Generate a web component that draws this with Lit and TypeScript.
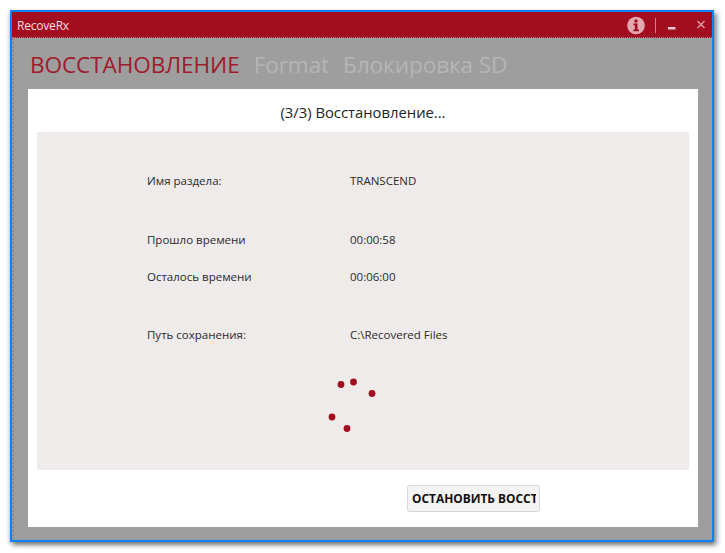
import { LitElement, html, css } from "lit";
import { customElement } from "lit/decorators.js";

@customElement("app-root")
export class AppRoot extends LitElement {
  static styles = css`
    :host { display: block; width: 725px; height: 553px; background: #fff; font-family: "Open Sans", "Noto Sans", sans-serif; overflow: hidden; }
    .page { box-sizing: border-box; width: 725px; height: 553px; padding: 10px 0 0 10px; }
    .window { box-sizing: border-box; width: 704px; height: 532px; border: 2px solid #0f7ffb; background: #9e9e9e; display: flex; flex-direction: column; box-shadow: 3px 3px 5px rgba(0,0,0,.45), -1px 2px 4px rgba(0,0,0,.2); }
    .titlebar { box-sizing: border-box; height: 26px; flex: none; background: #a20e20; display: flex; align-items: center; padding: 0 4px 0 5px; color: #f3dfe1; font-size: 12px; border-bottom: 1px dotted #8b8b8b; }
    .title { flex: 1; letter-spacing: -.2px; padding-top: 1px; }
    .controls { display: flex; align-items: center; }
    .body { flex: 1; display: flex; flex-direction: column; border-left: 2px dotted #8c8c8c; }
    .tabs { display: flex; gap: 14px; padding: 11px 0 0 16px; height: 40px; flex: none; box-sizing: border-box; font-size: 22.6px; line-height: 32px; color: #b5b5b5; white-space: nowrap; letter-spacing: -.1px; }
    .tabs .on { color: #a01a2c; }
    .panel { margin: 11px 0 0 14px; width: 670px; height: 438px; background: #fff; box-sizing: border-box; padding: 0 9px; display: flex; flex-direction: column; }
    .head { height: 43px; flex: none; display: flex; align-items: center; justify-content: center; font-size: 14.8px; color: #222; padding-top: 2px; box-sizing: border-box; }
    .info { height: 338px; flex: none; background: #efebea; box-sizing: border-box; padding-top: 39px; display: flex; flex-direction: column; align-items: flex-start; font-size: 11.5px; color: #2a2a2a; }
    .row { display: grid; grid-template-columns: 203px auto; margin-left: 110px; height: 20px; line-height: 20px; }
    .gap-a { margin-top: 39px; }
    .gap-b { margin-top: 17px; }
    .gap-c { margin-top: 38px; }
    .spin { margin: 30px 0 0 285px; width: 60px; height: 60px; display: block; }
    .foot { flex: 1; display: flex; align-items: flex-start; padding: 15px 0 0 370px; }
    .btn { box-sizing: border-box; width: 133px; height: 27px; border: 1px solid #d8d8d8; border-radius: 3px; background: #f5f4f4; font: 700 11.9px/25px "Open Sans", sans-serif; color: #111; padding: 0 0 0 4px; overflow: hidden; white-space: nowrap; }
    .clip { display: block; width: 124px; overflow: hidden; }
  `;
  render() {
    return html`<div class="page"><div class="window">
      <div class="titlebar"><span class="title">RecoveRx</span>
        <div class="controls">
          <svg width="84" height="25" viewBox="0 0 84 25">
            <circle cx="12" cy="13.500" r="8.800" fill="#e2a9b0"/>
            <circle cx="12" cy="9" r="1.700" fill="#a20e20"/>
            <path d="M9.500 11.500h4v6h1.500v1.800H9.300v-1.800h1.600v-4.200H9.500z" fill="#a20e20"/>
            <rect x="31" y="6" width="1" height="15" fill="#cf7f8a"/>
            <rect x="44" y="15" width="7.500" height="2.500" fill="#eac9cd"/>
            <path d="M73.500 9l7 7M80.500 9l-7 7" stroke="#d99aa3" stroke-width="1.500"/>
          </svg>
        </div>
      </div>
      <div class="body">
        <div class="tabs"><span class="on">ВОССТАНОВЛЕНИЕ</span><span>Format</span><span>Блокировка SD</span></div>
        <div class="panel">
          <div class="head">(3/3) Восстановление...</div>
          <div class="info">
            <div class="row"><span>Имя раздела:</span><span>TRANSCEND</span></div>
            <div class="row gap-a"><span>Прошло времени</span><span>00:00:58</span></div>
            <div class="row gap-b"><span>Осталось времени</span><span>00:06:00</span></div>
            <div class="row gap-c"><span>Путь сохранения:</span><span>C:\\Recovered Files</span></div>
            <svg class="spin" viewBox="0 0 60 60" fill="#a20e20">
              <circle cx="19" cy="9.500" r="3.400"/><circle cx="31.500" cy="7" r="3.400"/><circle cx="50" cy="18.500" r="3.400"/>
              <circle cx="10" cy="42" r="3.400"/><circle cx="25" cy="53.500" r="3.400"/>
            </svg>
          </div>
          <div class="foot"><button class="btn"><span class="clip">ОСТАНОВИТЬ ВОССТАНОВЛЕНИЕ</span></button></div>
        </div>
      </div>
    </div></div>`;
  }
}
